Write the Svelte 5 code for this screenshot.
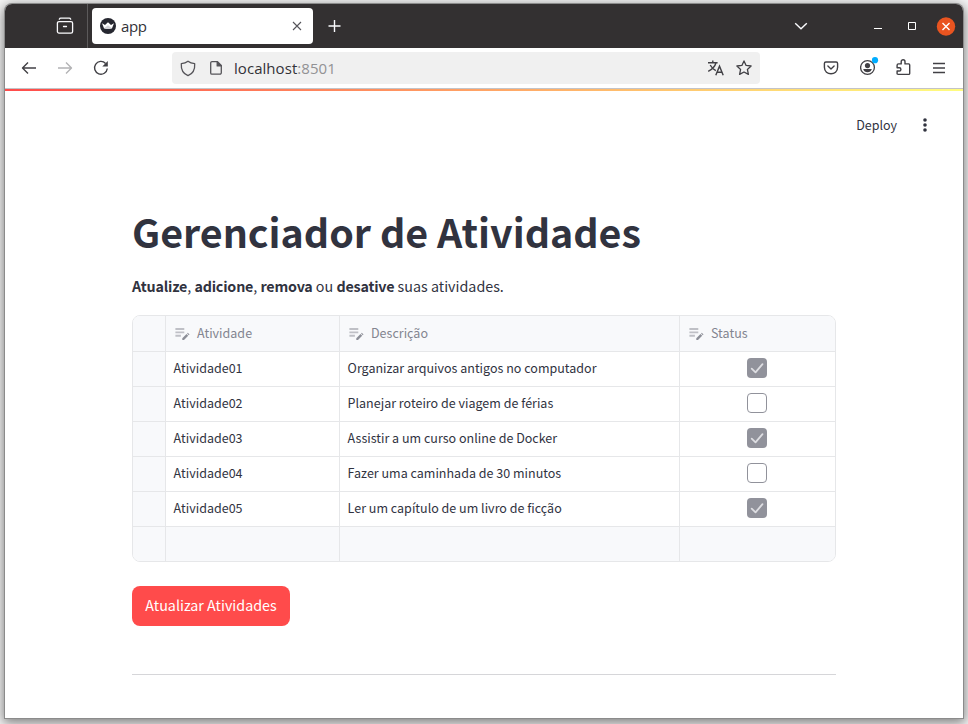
<script>
  const columns = ['Atividade', 'Descrição', 'Status'];
  const rows = [
    { name: 'Atividade01', description: 'Organizar arquivos antigos no computador', done: true },
    { name: 'Atividade02', description: 'Planejar roteiro de viagem de férias', done: false },
    { name: 'Atividade03', description: 'Assistir a um curso online de Docker', done: true },
    { name: 'Atividade04', description: 'Fazer uma caminhada de 30 minutos', done: false },
    { name: 'Atividade05', description: 'Ler um capítulo de um livro de ficção', done: true }
  ];
</script>

<div class="desktop">
  <div class="window">
    <header class="titlebar">
      <div class="pinned">
        <svg width="18" height="18" viewBox="0 0 18 18" fill="none" stroke="#fbfbfe" stroke-width="1.3" stroke-linecap="round">
          <path d="M3 4.600h12a1.600 1.600 0 0 1 1.600 1.600v8.300a1.600 1.600 0 0 1-1.600 1.600H3a1.600 1.600 0 0 1-1.600-1.600V6.200A1.600 1.600 0 0 1 3 4.600zM7.500 9.500h3" />
          <path d="M3.300 2.200Q3.700 1.200 4.800 1.200h8.400q1.100 0 1.500 1" />
        </svg>
      </div>
      <div class="tab">
        <svg width="16" height="16" viewBox="0 0 16 16">
          <circle cx="8" cy="8" r="8" fill="#262730" />
          <path d="M2 5.200 5 7 8 4.200l3 2.800 3-1.800-2 5q-4 1.100-8 0z" fill="#fff" />
          <path d="M4 10.200 8 7.200l4 3q-4 1.100-8 0z" fill="#d3d3d8" />
        </svg>
        <span class="tab-title">app</span>
        <svg width="10" height="10" viewBox="0 0 10 10" stroke="#55545a" stroke-width="1.1"><path d="M1 1l8 8M9 1L1 9" /></svg>
      </div>
      <svg class="plus" width="14" height="14" viewBox="0 0 14 14" stroke="#fbfbfe" stroke-width="1.400"><path d="M6.500 1v12M.5 7h12" /></svg>
      <div class="controls">
        <svg width="14" height="8" viewBox="0 0 14 8" fill="none" stroke="#fbfbfe" stroke-width="1.400"><path d="M1.200 1.200 7 6.800l5.800-5.600" /></svg>
        <svg class="min" width="8" height="10" viewBox="0 0 8 10" fill="#fff"><path d="M0 7h8v1H0z" /></svg>
        <svg class="max" width="8" height="8" viewBox="0 0 8 8" fill="none" stroke="#fff"><path d="M.5.5h7v7h-7z" /></svg>
        <svg class="close" width="20" height="20" viewBox="0 0 20 20"><circle cx="10" cy="10.500" r="9.200" fill="#e95420" /><path d="M6.500 7l7 7M13.500 7l-7 7" stroke="#fff" stroke-width="1.400" /></svg>
      </div>
    </header>

    <nav class="toolbar">
      <svg class="back" width="16" height="14" viewBox="0 0 16 14" fill="none" stroke="#414045" stroke-width="1.400" stroke-linejoin="round"><path d="M15 7H1.600M7 1.500 1.500 7 7 12.500" /></svg>
      <svg class="forward" width="16" height="14" viewBox="0 0 16 14" fill="none" stroke="#b3b3b5" stroke-width="1.400" stroke-linejoin="round"><path d="M1 7h13.400M9 1.500 14.500 7 9 12.500" /></svg>
      <svg class="reload" width="16" height="16" viewBox="0 0 16 16" fill="none" stroke="#414045" stroke-width="1.400"><path d="M14.300 8.500A6.400 6.400 0 1 1 12.600 3.400" /><path d="M14.800 1v5.600H9.300z" fill="#414045" stroke="none" /></svg>
      <div class="address">
        <svg width="16" height="17" viewBox="0 0 16 17" fill="none" stroke="#555459" stroke-width="1.300" stroke-linejoin="round"><path d="M8 1.200C6.200 2.700 4 3.500 1.300 3.700.9 9.800 3.200 13.700 8 15.700c4.800-2 7.100-5.900 6.700-12C12 3.500 9.800 2.700 8 1.200z" /></svg>
        <svg class="page" width="12" height="14" viewBox="0 0 12 14" fill="none" stroke="#555459" stroke-width="1.300" stroke-linejoin="round"><path d="M2 .7h5.500l3.800 3.800v7.300a1.400 1.400 0 0 1-1.400 1.400H2A1.300 1.300 0 0 1 .7 11.900V2A1.300 1.300 0 0 1 2 .7z" /><path d="M7.200 1v3.900h4z" fill="#555459" /></svg>
        <span class="url">localhost<span>:8501</span></span>
        <svg class="translate" width="17" height="16" viewBox="0 0 17 16" fill="none" stroke="#414045" stroke-width="1.400"><path d="M1 2.700h9.600M5.800.4v2.300M3.200 5q2 3.700 5.600 5.700M9 2.700Q7.600 8 1.200 11.300" /><path d="M8.800 15.200l3.700-9 3.700 9M10 12.200h5" /></svg>
        <svg class="star" width="16" height="16" viewBox="0 0 16 16" fill="none" stroke="#414045" stroke-width="1.300" stroke-linejoin="round"><path d="M8 .9l2.100 4.500 5 .6-3.700 3.400 1 5L8 12l-4.400 2.400 1-5L.9 6l5-.6z" /></svg>
      </div>
      <svg class="pocket" width="16" height="14" viewBox="0 0 16 14" fill="none" stroke="#414045" stroke-width="1.400" stroke-linecap="round" stroke-linejoin="round"><path d="M2.900 1h10.200a1.500 1.500 0 0 1 1.500 1.500v3.700c0 8.800-13.200 8.800-13.200 0V2.500A1.500 1.500 0 0 1 2.900 1z" /><path d="M4.900 5l3.100 2.900L11.100 5" /></svg>
      <svg class="account" width="19" height="20" viewBox="0 0 19 20"><circle cx="7.500" cy="11.500" r="6.900" fill="none" stroke="#414045" stroke-width="1.300" /><circle cx="7.500" cy="9.600" r="2.600" fill="#414045" /><path d="M3.200 13h8.600q-1 3.200-4.300 3.200T3.200 13z" fill="#414045" /><circle cx="15" cy="4.200" r="3.100" fill="#00adff" /></svg>
      <svg class="extension" width="15" height="17" viewBox="0 0 15 17" fill="none" stroke="#414045" stroke-width="1.400" stroke-linejoin="round"><path d="M2.500 4.900h2.700V2.700a1.900 1.900 0 0 1 3.800 0v2.200h3.700a1 1 0 0 1 1 1v8.500a1 1 0 0 1-1 1H2.100a1 1 0 0 1-1-1V12h2.200a1.600 1.600 0 0 0 0-3.200H1.100V6.200q0-1.300 1.400-1.300z" /></svg>
      <svg class="menu" width="12" height="12" viewBox="0 0 12 12" fill="none" stroke="#414045" stroke-width="1.400"><path d="M0 1.500h12M0 6h12M0 10.500h12" /></svg>
    </nav>
    <div class="decoration"></div>

    <div class="app-header">
      <span>Deploy</span>
      <svg width="4" height="14" viewBox="0 0 4 14" fill="#31333f"><circle cx="2" cy="2" r="1.800" /><circle cx="2" cy="7" r="1.800" /><circle cx="2" cy="12" r="1.800" /></svg>
    </div>

    <main>
      <h1>Gerenciador de Atividades</h1>
      <p><strong>Atualize</strong>, <strong>adicione</strong>, <strong>remova</strong> ou <strong>desative</strong> suas atividades.</p>

      <div class="table">
        <div class="row head">
          <div class="cell marker"></div>
          {#each columns as column}
            <div class="cell">
              <svg width="15" height="14" viewBox="0 0 15 14"><path d="M.4 1h8.900v1.900H.4zM.4 4.400h8.900v1.900H.4zM.4 7.800h5.500v1.900H.4z" fill="#bfc0c6" /><path d="M7.300 13v-1.800l4.200-4.100 1.700 1.700L9 13zM12.100 6.500l.7-.7 1.700 1.700-.7.7z" fill="#8c8e97" /></svg>
              <span>{column}</span>
            </div>
          {/each}
        </div>
        {#each rows as row}
          <div class="row">
            <div class="cell marker"></div>
            <div class="cell">{row.name}</div>
            <div class="cell">{row.description}</div>
            <div class="cell status">
              <div class="check" class:done={row.done}>
                {#if row.done}
                  <svg width="20" height="20" viewBox="0 0 20 20" fill="none" stroke="#dedee2" stroke-width="1.800" stroke-linecap="round" stroke-linejoin="round"><path d="M4.700 10.700l3.800 3.700 7-8.200" /></svg>
                {/if}
              </div>
            </div>
          </div>
        {/each}
        <div class="row foot">
          <div class="cell"></div><div class="cell"></div><div class="cell"></div><div class="cell"></div>
        </div>
      </div>

      <button>Atualizar Atividades</button>
      <hr />
    </main>
  </div>
</div>

<style>
  :global(body) { margin: 0; overflow: hidden; }
  .desktop {
    box-sizing: border-box; width: 968px; height: 724px; padding: 4px 5px 6px;
    overflow: hidden; background: #f5f5f5;
    font-family: "Noto Sans CJK JP", "Noto Sans", sans-serif; color: #31333f;
  }
  svg { display: block; flex: none; }
  .window {
    width: 958px; height: 714px; background: #fff; border-radius: 7px 7px 0 0;
    box-shadow: 0 0 0 1px #8b8b8b, 0 3px 12px 2px rgba(0, 0, 0, .48);
  }
  .titlebar { display: flex; align-items: center; height: 44px; background: #333031; border-radius: 7px 7px 0 0; }
  .pinned { box-sizing: border-box; display: flex; align-items: center; width: 83px; height: 44px; padding-left: 51px; border-right: 1px solid #5c5a5b; }
  .tab {
    box-sizing: border-box; display: flex; align-items: center; width: 221px; height: 36px; margin-left: 4px; padding: 0 11px 0 8px;
    border-radius: 4px; background: #fff; font: 15px "Open Sans", sans-serif; color: #333238;
  }
  .tab-title { flex: 1; margin-left: 5px; line-height: 34px; letter-spacing: -.35px; }
  .plus { margin-left: 15px; }
  .controls { flex: 1; display: flex; align-items: center; justify-content: flex-end; padding-right: 7px; }
  .controls svg { margin-bottom: 1px; }
  .controls .min { margin-left: 66px; }
  .controls .max { margin: 0 20px 1px 26px; }
  .toolbar { display: flex; align-items: center; height: 40px; border-bottom: 1px solid #c3c3c7; }
  .back { margin-left: 16px; }
  .forward { margin-left: 20px; }
  .reload { margin-left: 20px; }
  .address { box-sizing: border-box; display: flex; align-items: center; width: 588px; height: 32px; margin-left: 63px; padding: 0 8px; background: #f0f0f0; border-radius: 4px; }
  .page { margin-left: 14px; }
  .url { flex: 1; margin-left: 12px; font: 15px/30px "Open Sans", sans-serif; color: #333238; letter-spacing: .05px; }
  .url span { color: #929294; }
  .star { margin-left: 12px; }
  .pocket { margin-left: 63px; }
  .account { margin: -4px 0 0 21px; }
  .extension { margin: -1px 0 0 17px; }
  .menu { margin-left: 22px; }
  .decoration { height: 2px; background: linear-gradient(90deg, #ff4b4b, #fffd80); }
  .app-header { display: flex; align-items: center; justify-content: flex-end; height: 67px; padding-right: 36px; font-size: 12.5px; }
  .app-header svg { margin-left: 26px; }
  main { width: 704px; margin-left: 127px; }
  h1 { height: 52px; margin: 47px 0 0; font-size: 39.4px; line-height: 52px; font-weight: 700; letter-spacing: -.02px; white-space: nowrap; }
  p { height: 24px; margin: 17px 0 0; font-size: 14.3px; line-height: 24px; white-space: nowrap; }
  strong { font-weight: 600; letter-spacing: -.19px; }
  .table { box-sizing: border-box; margin-top: 17px; height: 247px; border: 1px solid #e6e7e9; border-radius: 8px; overflow: hidden; font-size: 12.5px; }
  .row { display: grid; grid-template-columns: 33px 174px 340px 155px; height: 35px; }
  .cell { box-sizing: border-box; display: flex; align-items: center; padding: 0 0 3px 7.6px; border-right: 1px solid #e6e7e9; border-bottom: 1px solid #e6e7e9; white-space: nowrap; letter-spacing: .01px; }
  .cell:last-child { border-right: 0; }
  .head { height: 36px; color: #838590; }
  .head .cell { padding: 0 0 2px 9px; }
  .head svg { margin-top: 3px; }
  .head span { margin-left: 7px; }
  .head, .foot, .marker { background: #f8f9fb; }
  .foot .cell { border-bottom: 0; }
  .cell.status { justify-content: center; padding: 0 0 2px; }
  .check { box-sizing: border-box; width: 20px; height: 20px; margin-right: 1px; border: 1px solid #91929b; border-radius: 4px; }
  .done { border: 0; background: #91929b; }
  button { display: block; width: 158px; height: 40px; margin-top: 24px; padding: 0 0 3px; border: 0; border-radius: 8px; background: #ff4b4b; color: #fff; font: 14.3px "Noto Sans CJK JP", sans-serif; white-space: nowrap; }
  hr { height: 1px; margin: 48px 0 0; border: 0; background: #d6d6d9; }
</style>
